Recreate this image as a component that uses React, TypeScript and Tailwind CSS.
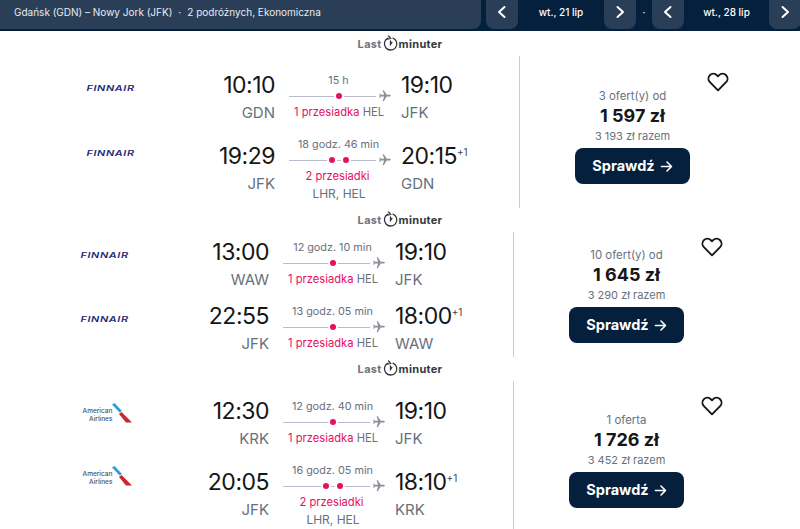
import React from 'react';

const font = { fontFamily: 'Inter, "Noto Sans", sans-serif' };

const ChevronBtn: React.FC<{ dir: 'l' | 'r' }> = ({ dir }) => (
  <div className="flex h-[29px] w-[32px] shrink-0 items-center justify-center rounded-b-lg bg-[#2a3f57] pb-[5px]">
    <svg width="14" height="14" viewBox="0 0 14 14" fill="none" stroke="white" strokeWidth="2" strokeLinecap="round" strokeLinejoin="round">
      <path d={dir === 'l' ? 'M9.5 2 4 7l5.5 5' : 'M4.5 2 10 7l-5.5 5'} />
    </svg>
  </div>
);

const Header: React.FC = () => (
  <div className="flex h-[31px] w-[800px] shrink-0 items-start overflow-hidden bg-[#05203c] text-white">
    <div className="flex h-[29px] w-[481px] shrink-0 items-center rounded-br-lg bg-[#2a3f57] pb-[5px] pl-[14px] text-[10px] text-[#e8ebef]">
      <span>Gdańsk (GDN) – Nowy Jork (JFK)</span>
      <span className="mx-[6px]">·</span>
      <span>2 podróżnych, Ekonomiczna</span>
    </div>
    <div className="ml-[5px] flex w-[150px] shrink-0 justify-between">
      <ChevronBtn dir="l" />
      <div className="flex h-[25px] items-center text-[10px] font-medium">wt., 21 lip</div>
      <ChevronBtn dir="r" />
    </div>
    <div className="flex h-[25px] w-[16px] shrink-0 items-center justify-center text-[10px]">·</div>
    <div className="flex w-[149px] shrink-0 justify-between">
      <ChevronBtn dir="l" />
      <div className="flex h-[25px] items-center text-[10px] font-medium">wt., 28 lip</div>
      <ChevronBtn dir="r" />
    </div>
  </div>
);

const LastMinuter: React.FC = () => (
  <div className="flex h-[20px] shrink-0 items-center justify-center pb-[3px] text-[11px] font-bold leading-none tracking-[0.3px]">
    <span className="text-[#6f7378]">Last</span>
    <svg width="17" height="17" viewBox="0 0 17 17" fill="none" stroke="#33383e" strokeWidth="1.3" strokeLinecap="round" className="mb-[2px]">
      <path d="M6 3.2a6.2 6.2 0 1 0 5-.1" />
      <path d="M6.6 1 8.6 3.4 5.8 4.2M8.5 6v3.4l1.4-2" />
    </svg>
    <span className="text-[#33383e]">minuter</span>
  </div>
);

const Finnair: React.FC = () => (
  <span className="scale-x-[1.55] text-[7px] font-semibold italic leading-none tracking-[0.4px] text-[#1c2a78]">FINNAIR</span>
);

const American: React.FC = () => (
  <div className="ml-[6px] flex items-start">
    <div className="pt-[4px] text-right text-[6.5px] font-medium leading-[8px] text-[#465262]">
      American
      <br />
      Airlines
    </div>
    <svg width="21" height="21" viewBox="0 0 21 21">
      <path d="M0 1.5 2.5 0 10 8 7.5 9.5z" fill="#2f9ed8" />
      <path d="M7 11 9.5 9 20 19.5 14 19.5z" fill="#d0222f" />
      <path d="M9 15.5 14 19.8 20 20 15 20z" fill="#c4c9cf" />
    </svg>
  </div>
);

const Plane: React.FC = () => (
  <svg width="14" height="14" viewBox="0 0 24 24" fill="#8b909f" className="rotate-90">
    <path d="M21 16v-2l-8-5V3.5c0-.83-.67-1.5-1.5-1.5S10 2.67 10 3.5V9l-8 5v2l8-2.5V19l-2 1.5V22l3.5-1 3.5 1v-1.5L13 19v-5.5l8 2.5z" />
  </svg>
);

interface Leg {
  airline: 'finnair' | 'american';
  dep: string;
  depCode: string;
  arr: string;
  arrCode: string;
  plus?: boolean;
  duration: string;
  stops: string;
  stopCount: number;
  via: string;
}

const LegRow: React.FC<{ leg: Leg }> = ({ leg }) => {
  const twoStops = leg.stopCount === 2;
  const logoPad =
    leg.airline === 'finnair' ? (twoStops ? 'pt-[13px]' : 'pt-[16px]') : twoStops ? 'pt-[3px]' : 'pt-[8px]';
  return (
    <div className="flex items-center">
      <div className={`flex w-[190px] shrink-0 justify-center self-start pl-5 ${logoPad}`}>
        {leg.airline === 'finnair' ? <Finnair /> : <American />}
      </div>
      <div className={`w-[79px] shrink-0 text-right ${twoStops ? 'mb-1' : ''}`}>
        <div className="text-[23px] leading-[32px] tracking-[-0.5px] text-[#161616]">{leg.dep}</div>
        <div className="text-[15px] leading-[24px] text-[#68707c]">{leg.depCode}</div>
      </div>
      <div className="ml-[14px] w-[103px] shrink-0 text-center text-[10.8px] leading-[16px] text-[#68707c]">
        <div className="pr-[4px]">{leg.duration}</div>
        <div className="flex h-[14px] items-center">
          <div className="relative flex h-[14px] w-[87px] items-center">
            <div className="h-px w-full bg-[#b9bdcb]" />
            <div className="absolute inset-0 flex items-center justify-center gap-1 pl-[13px]">
              {Array.from({ length: leg.stopCount }).map((_, i) => (
                <div key={i} className="h-[10px] w-[10px] rounded-full border-2 border-white bg-[#e6105f]" />
              ))}
            </div>
          </div>
          <div className="ml-[2px]">
            <Plane />
          </div>
        </div>
        {twoStops ? (
          <>
            <div className="pr-[6px] text-[11.2px] leading-[18px] text-[#e6105f]">{leg.stops}</div>
            <div className="pr-[3px] text-[12px] leading-[18px]">{leg.via}</div>
          </>
        ) : (
          <div className="pr-[3px] text-[11.2px] leading-[18px] whitespace-nowrap">
            <span className="text-[#e6105f]">{leg.stops}</span> {leg.via}
          </div>
        )}
      </div>
      <div className={`ml-[9px] ${twoStops ? 'mb-1' : ''}`}>
        <div className="flex items-start text-[23px] leading-[32px] tracking-[-0.5px] text-[#161616]">
          {leg.arr}
          {leg.plus && <span className="mt-[6px] text-[10px] leading-[12px] tracking-normal text-[#444]">+1</span>}
        </div>
        <div className="text-[15px] leading-[24px] text-[#68707c]">{leg.arrCode}</div>
      </div>
    </div>
  );
};

interface Offer {
  cardClass: string;
  offers: string;
  price: string;
  total: string;
  legs: Leg[];
  legGap: string;
  rowPad: string;
  pricePad: string;
  heartTop: string;
}

const Card: React.FC<{ offer: Offer }> = ({ offer }) => (
  <div className={`flex shrink-0 ${offer.cardClass}`}>
    <div className={`flex w-[513px] shrink-0 flex-col ${offer.rowPad} ${offer.legGap}`}>
      {offer.legs.map((leg, i) => (
        <LegRow key={i} leg={leg} />
      ))}
    </div>
    <div className={`relative flex w-[226px] shrink-0 flex-col items-center border-l border-[#c9ccd2] ${offer.pricePad}`}>
      <div className="text-[11.4px] leading-[16px] text-[#68707c]">{offer.offers}</div>
      <div className="text-[18px] font-bold leading-[24px] text-[#161616]">{offer.price}</div>
      <div className="text-[11px] leading-[16px] text-[#68707c]">{offer.total}</div>
      <button className="mt-[4px] flex h-[36px] w-[115px] items-center justify-center gap-[5px] rounded-lg bg-[#05203c] text-[14.5px] font-bold text-white">
        Sprawdź
        <svg width="13" height="13" viewBox="0 0 13 13" fill="none" stroke="white" strokeWidth="1.6" strokeLinecap="round" strokeLinejoin="round">
          <path d="M1.5 6.5h10M7 2l4.5 4.5L7 11" />
        </svg>
      </button>
      <svg width="22" height="20" viewBox="0 0 22 20" fill="none" stroke="#161616" strokeWidth="1.9" strokeLinejoin="round" className={`absolute left-[187px] ${offer.heartTop}`}>
        <path d="M11 18.3 2.9 10.2a5 5 0 0 1 0-7 5 5 0 0 1 7 0l1.1 1.1 1.1-1.1a5 5 0 0 1 7 0 5 5 0 0 1 0 7z" />
      </svg>
    </div>
  </div>
);

const offers: Offer[] = [
  {
    cardClass: 'ml-[6px] h-[152px]',
    offers: '3 ofert(y) od',
    price: '1 597 zł',
    total: '3 193 zł razem',
    legGap: 'gap-3',
    rowPad: 'pt-[13px]',
    pricePad: 'pt-[32px]',
    heartTop: 'top-[16px]',
    legs: [
      { airline: 'finnair', dep: '10:10', depCode: 'GDN', arr: '19:10', arrCode: 'JFK', duration: '15 h', stops: '1 przesiadka', stopCount: 1, via: 'HEL' },
      { airline: 'finnair', dep: '19:29', depCode: 'JFK', arr: '20:15', arrCode: 'GDN', plus: true, duration: '18 godz. 46 min', stops: '2 przesiadki', stopCount: 2, via: 'LHR, HEL' },
    ],
  },
  {
    cardClass: 'h-[125px]',
    offers: '10 ofert(y) od',
    price: '1 645 zł',
    total: '3 290 zł razem',
    legGap: 'gap-2',
    rowPad: 'pt-[4px]',
    pricePad: 'pt-[15px]',
    heartTop: 'top-[5px]',
    legs: [
      { airline: 'finnair', dep: '13:00', depCode: 'WAW', arr: '19:10', arrCode: 'JFK', duration: '12 godz. 10 min', stops: '1 przesiadka', stopCount: 1, via: 'HEL' },
      { airline: 'finnair', dep: '22:55', depCode: 'JFK', arr: '18:00', arrCode: 'WAW', plus: true, duration: '13 godz. 05 min', stops: '1 przesiadka', stopCount: 1, via: 'HEL' },
    ],
  },
  {
    cardClass: 'h-[148px]',
    offers: '1 oferta',
    price: '1 726 zł',
    total: '3 452 zł razem',
    legGap: 'gap-3',
    rowPad: 'pt-[14px]',
    pricePad: 'pt-[31px]',
    heartTop: 'top-[15px]',
    legs: [
      { airline: 'american', dep: '12:30', depCode: 'KRK', arr: '19:10', arrCode: 'JFK', duration: '12 godz. 40 min', stops: '1 przesiadka', stopCount: 1, via: 'HEL' },
      { airline: 'american', dep: '20:05', depCode: 'JFK', arr: '18:10', arrCode: 'KRK', plus: true, duration: '16 godz. 05 min', stops: '2 przesiadki', stopCount: 2, via: 'LHR, HEL' },
    ],
  },
];

export default function App() {
  return (
    <div className="flex h-[529px] w-[800px] flex-col overflow-hidden bg-white" style={font}>
      <Header />
      <div className="h-[5px] shrink-0" />
      {offers.map((offer, i) => (
        <React.Fragment key={i}>
          <LastMinuter />
          <Card offer={offer} />
          <div className="h-[4px] shrink-0" />
        </React.Fragment>
      ))}
    </div>
  );
}
